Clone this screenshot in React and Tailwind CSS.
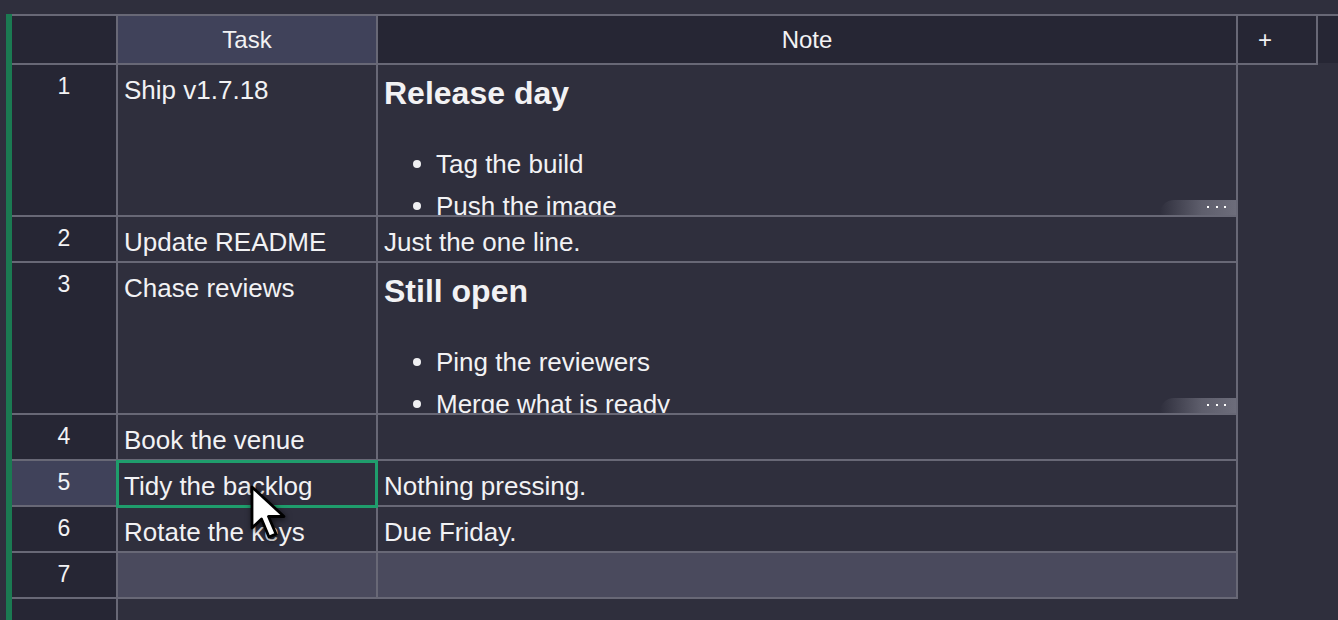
import React from 'react';

const rows = [
  { n: 1, task: 'Ship v1.7.18', heading: 'Release day', items: ['Tag the build', 'Push the image'], tall: true },
  { n: 2, task: 'Update README', note: 'Just the one line.' },
  { n: 3, task: 'Chase reviews', heading: 'Still open', items: ['Ping the reviewers', 'Merge what is ready'], tall: true },
  { n: 4, task: 'Book the venue', note: '' },
  { n: 5, task: 'Tidy the backlog', note: 'Nothing pressing.', active: true },
  { n: 6, task: 'Rotate the keys', note: 'Due Friday.' },
  { n: 7, task: '', note: '', blank: true },
];

function MoreFade() {
  return (
    <div className="absolute right-0 bottom-0 w-[76px] h-[15px] rounded-tl-[14px] bg-[linear-gradient(to_right,rgba(47,47,61,0),rgba(110,110,124,0.75)_55%,rgba(120,120,134,0.85))] flex items-center justify-end gap-[6.5px] pr-[10px] pb-[1px]">
      <span className="w-[2px] h-[2px] bg-white" />
      <span className="w-[2px] h-[2px] bg-white" />
      <span className="w-[2px] h-[2px] bg-white" />
    </div>
  );
}

function NoteCell({ row }) {
  if (row.heading) {
    return (
      <div className="pt-[10px] pl-[6px]">
        <div className="text-[32px] leading-[37px] font-bold">{row.heading}</div>
        <ul className="mt-[37px] flex flex-col gap-[12px]">
          {row.items.map((item) => (
            <li key={item} className="flex items-center h-[30px] leading-[30px] text-[26px]">
              <span className="ml-[29px] mr-[15px] w-[8px] h-[8px] rounded-full bg-[#f0f0f2]" />
              {item}
            </li>
          ))}
        </ul>
        <MoreFade />
      </div>
    );
  }
  return <div className="pt-[10px] pl-[6px] text-[26px] leading-[30px]">{row.note}</div>;
}

export default function App() {
  return (
    <div className="relative h-[620px] overflow-hidden bg-[#2f2f3d] pt-[14px] flex text-[#f2f2f4] font-['Liberation_Sans',Arial,sans-serif]">
      <div className="w-[6px]" />
      <div className="w-[6px] bg-[#1b7a52]" />

      <div className="flex-1 flex flex-col border-t-2 border-[#686876]">
        {/* Header */}
        <div className="flex h-[49px] shrink-0">
          <div className="w-[106px] border-r-2 border-b-2 border-[#686876] bg-[#262634]" />
          <div className="w-[260px] border-r-2 border-b-2 border-[#686876] bg-[#40425a] flex items-center justify-center pt-[1px] text-[24px]">
            Task
          </div>
          <div className="w-[860px] border-r-2 border-b-2 border-[#686876] bg-[#262634] flex items-center justify-center pt-[1px] text-[24px]">
            Note
          </div>
          <div className="w-[80px] border-r-2 border-b-2 border-[#686876] bg-[#262634] flex items-center pl-[20px] pt-[1px] text-[24px]">
            +
          </div>
          <div className="flex-1 h-[47px] bg-[#262634]" />
        </div>

        {/* Body rows */}
        {rows.map((row) => (
          <div key={row.n} className={`flex shrink-0 ${row.tall ? 'h-[152px]' : 'h-[46px]'}`}>
            <div
              className={`w-[106px] border-r-2 border-b-2 border-[#686876] flex justify-center pt-[8px] text-[23px] leading-[26px] ${
                row.active ? 'bg-[#40425a]' : 'bg-[#262634]'
              }`}
            >
              {row.n}
            </div>
            <div
              className={`w-[260px] border-r-2 border-b-2 border-[#686876] pt-[10px] pl-[6px] text-[26px] leading-[30px] ${
                row.blank ? 'bg-[#4a4a5d]' : ''
              }`}
            >
              {row.task}
            </div>
            <div
              className={`relative w-[860px] border-r-2 border-b-2 border-[#686876] overflow-hidden ${
                row.blank ? 'bg-[#4a4a5d]' : ''
              }`}
            >
              <NoteCell row={row} />
            </div>
          </div>
        ))}

        <div className="flex-1 flex">
          <div className="w-[106px] border-r-2 border-[#686876] bg-[#262634]" />
        </div>
      </div>

      {/* Selected cell */}
      <div className="absolute left-[116px] top-[460px] w-[262px] h-[48px] border-[3px] border-[#1f9d6c]" />

      {/* Mouse pointer */}
      <svg
        className="absolute left-[249px] top-[484px] drop-shadow-[1px_2px_3px_rgba(0,0,0,0.6)]"
        width="46"
        height="62"
        viewBox="0 0 46 62"
      >
        <path
          d="M3 3 L3 44 L12.5 35 L20 53 L27 50 L19.5 32.5 L35 32.5 Z"
          fill="#ffffff"
          stroke="#000000"
          strokeWidth="2.8"
          strokeLinejoin="round"
        />
      </svg>
    </div>
  );
}
